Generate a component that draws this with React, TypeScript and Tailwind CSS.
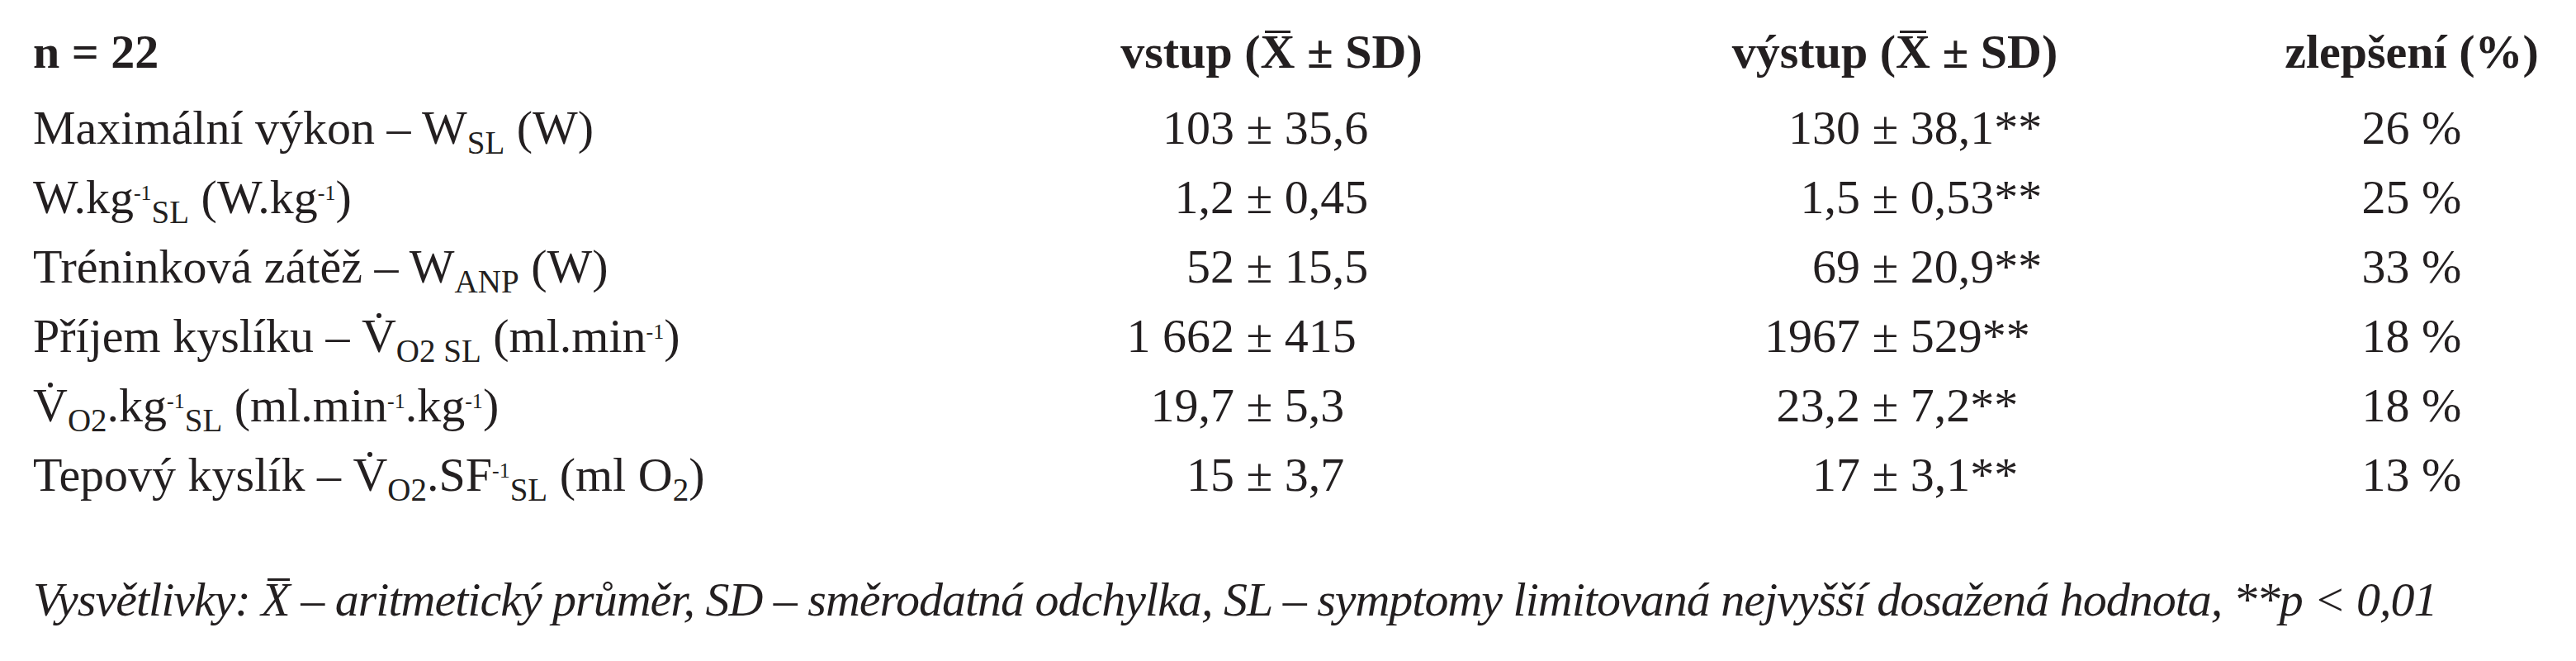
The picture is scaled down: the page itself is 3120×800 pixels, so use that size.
import type { ReactNode } from "react";

const Sub = ({ children }: { children: ReactNode }) => (
  <span className="text-[39px] leading-none align-[-12px]">{children}</span>
);

const Sup = ({ children }: { children: ReactNode }) => (
  <span className="text-[26px] leading-none align-[16px]">{children}</span>
);

// X with a bar over it (mean)
const XBar = ({ italic = false }: { italic?: boolean }) => (
  <span className="relative inline-block leading-none">
    X
    <span
      className={
        italic
          ? "absolute left-[22%] right-[-2%] top-[3px] h-[3px] bg-current"
          : "absolute left-[12%] right-[12%] top-[3px] h-[3px] bg-current"
      }
    />
  </span>
);

// V with dot above (flow rate)
const VDot = () => (
  <span className="relative inline-block leading-none">
    V
    <span className="absolute left-1/2 top-[1px] h-[6px] w-[6px] -translate-x-1/2 rounded-full bg-current" />
  </span>
);

interface Row {
  label: ReactNode;
  pre: [string, string];
  post: [string, string];
  gain: string;
}

const rows: Row[] = [
  {
    label: (
      <>
        Maximální výkon – W<Sub>SL</Sub> (W)
      </>
    ),
    pre: ["103", "35,6"],
    post: ["130", "38,1**"],
    gain: "26 %",
  },
  {
    label: (
      <>
        W.kg<Sup>-1</Sup>
        <Sub>SL</Sub> (W.kg<Sup>-1</Sup>)
      </>
    ),
    pre: ["1,2", "0,45"],
    post: ["1,5", "0,53**"],
    gain: "25 %",
  },
  {
    label: (
      <>
        Tréninková zátěž – W<Sub>ANP</Sub> (W)
      </>
    ),
    pre: ["52", "15,5"],
    post: ["69", "20,9**"],
    gain: "33 %",
  },
  {
    label: (
      <>
        Příjem kyslíku – <VDot />
        <Sub>O2 SL</Sub> (ml.min<Sup>-1</Sup>)
      </>
    ),
    pre: ["1 662", "415"],
    post: ["1967", "529**"],
    gain: "18 %",
  },
  {
    label: (
      <>
        <VDot />
        <Sub>O2</Sub>.kg<Sup>-1</Sup>
        <Sub>SL</Sub> (ml.min<Sup>-1</Sup>.kg<Sup>-1</Sup>)
      </>
    ),
    pre: ["19,7", "5,3"],
    post: ["23,2", "7,2**"],
    gain: "18 %",
  },
  {
    label: (
      <>
        Tepový kyslík – <VDot />
        <Sub>O2</Sub>.SF<Sup>-1</Sup>
        <Sub>SL</Sub> (ml O<Sub>2</Sub>)
      </>
    ),
    pre: ["15", "3,7"],
    post: ["17", "3,1**"],
    gain: "13 %",
  },
];

function PlusMinus({ left, right, width }: { left: string; right: string; width: string }) {
  return (
    <div className="flex whitespace-pre">
      <span className={`${width} text-right`}>{left}</span>
      <span>{` ± ${right}`}</span>
    </div>
  );
}

export default function App() {
  return (
    <div className="h-[800px] w-[3120px] bg-white pl-[40px] pt-[21px] font-['Liberation_Serif',serif] text-[58px] leading-[84px] text-[#231f20]">
      {/* header */}
      <div className="flex h-[92px] font-bold whitespace-nowrap">
        <div className="w-[1260px]">n = 22</div>
        <div className="flex w-[480px] justify-center">
          <span>
            vstup (<XBar /> ± SD)
          </span>
        </div>
        <div className="flex w-[1030px] justify-center">
          <span>
            výstup (<XBar /> ± SD)
          </span>
        </div>
        <div className="flex w-[222px] justify-center">zlepšení (%)</div>
      </div>

      {/* data rows */}
      {rows.map((row, i) => (
        <div key={i} className="flex h-[84px] whitespace-nowrap">
          <div className="w-[1260px]">{row.label}</div>
          <div className="w-[480px]">
            <PlusMinus left={row.pre[0]} right={row.pre[1]} width="w-[195px]" />
          </div>
          <div className="w-[1030px]">
            <PlusMinus left={row.post[0]} right={row.post[1]} width="w-[473px]" />
          </div>
          <div className="flex w-[222px] justify-center">{row.gain}</div>
        </div>
      ))}

      {/* legend */}
      <p className="mt-[67px] whitespace-nowrap italic tracking-[-1px]">
        Vysvětlivky: <XBar italic /> – aritmetický průměr, SD – směrodatná odchylka, SL – symptomy limitovaná
        nejvyšší dosažená hodnota, **p &lt; 0,01
      </p>
    </div>
  );
}
